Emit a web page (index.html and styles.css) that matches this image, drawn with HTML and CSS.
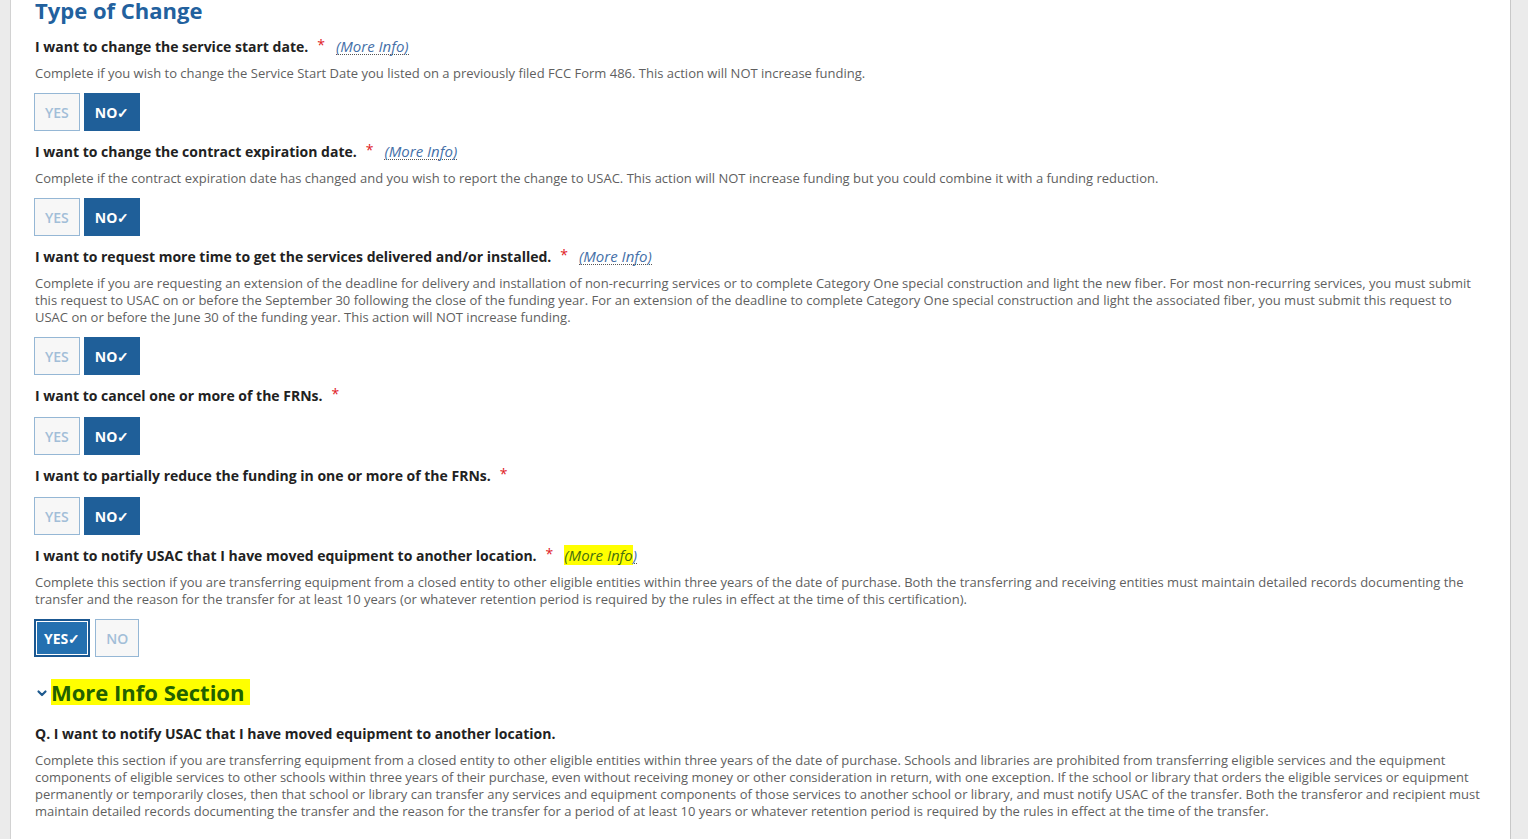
FILE: index.html
```html
<!DOCTYPE html>
<html>
<head>
<meta charset="utf-8">
<link rel="stylesheet" href="styles.css">
</head>
<body>
<div class="page">
  <main class="panel">
    <h2 class="title">Type of Change</h2>

    <section class="q">
      <div class="q-label">I want to change the service start date.<span class="req">*</span><a class="more">(More Info)</a></div>
      <p class="q-desc">Complete if you wish to change the Service Start Date you listed on a previously filed FCC Form 486. This action will NOT increase funding.</p>
      <div class="toggle"><button class="btn off">YES</button><button class="btn on">NO✓</button></div>
    </section>

    <section class="q">
      <div class="q-label">I want to change the contract expiration date.<span class="req">*</span><a class="more">(More Info)</a></div>
      <p class="q-desc">Complete if the contract expiration date has changed and you wish to report the change to USAC. This action will NOT increase funding but you could combine it with a funding reduction.</p>
      <div class="toggle"><button class="btn off">YES</button><button class="btn on">NO✓</button></div>
    </section>

    <section class="q">
      <div class="q-label">I want to request more time to get the services delivered and/or installed.<span class="req">*</span><a class="more">(More Info)</a></div>
      <p class="q-desc">Complete if you are requesting an extension of the deadline for delivery and installation of non-recurring services or to complete Category One special construction and light the new fiber. For most non-recurring services, you must submit this request to USAC on or before the September 30 following the close of the funding year. For an extension of the deadline to complete Category One special construction and light the associated fiber, you must submit this request to USAC on or before the June 30 of the funding year. This action will NOT increase funding.</p>
      <div class="toggle"><button class="btn off">YES</button><button class="btn on">NO✓</button></div>
    </section>

    <section class="q">
      <div class="q-label">I want to cancel one or more of the FRNs.<span class="req">*</span></div>
      <div class="toggle"><button class="btn off">YES</button><button class="btn on">NO✓</button></div>
    </section>

    <section class="q">
      <div class="q-label">I want to partially reduce the funding in one or more of the FRNs.<span class="req">*</span></div>
      <div class="toggle"><button class="btn off">YES</button><button class="btn on">NO✓</button></div>
    </section>

    <section class="q">
      <div class="q-label">I want to notify USAC that I have moved equipment to another location.<span class="req">*</span><a class="more"><span class="hl">(More Info</span>)</a></div>
      <p class="q-desc">Complete this section if you are transferring equipment from a closed entity to other eligible entities within three years of the date of purchase. Both the transferring and receiving entities must maintain detailed records documenting the transfer and the reason for the transfer for at least 10 years (or whatever retention period is required by the rules in effect at the time of this certification).</p>
      <div class="toggle"><button class="btn on focus">YES✓</button><button class="btn off">NO</button></div>
    </section>

    <h3 class="more-title">
      <svg class="chev" width="12" height="10" viewBox="0 0 12 10"><path d="M2.5 3.5 L6 7 L9.5 3.5" fill="none" stroke="#1f5a8f" stroke-width="2.2" stroke-linecap="round" stroke-linejoin="round"/></svg><span class="hl-big">More Info Section</span>
    </h3>

    <div class="q-label">Q. I want to notify USAC that I have moved equipment to another location.</div>
    <p class="q-desc">Complete this section if you are transferring equipment from a closed entity to other eligible entities within three years of the date of purchase. Schools and libraries are prohibited from transferring eligible services and the equipment components of eligible services to other schools within three years of their purchase, even without receiving money or other consideration in return, with one exception. If the school or library that orders the eligible services or equipment permanently or temporarily closes, then that school or library can transfer any services and equipment components of those services to another school or library, and must notify USAC of the transfer. Both the transferor and recipient must maintain detailed records documenting the transfer and the reason for the transfer for a period of at least 10 years or whatever retention period is required by the rules in effect at the time of the transfer.</p>
  </main>
</div>
</body>
</html>
```

FILE: styles.css
```css
html, body {
  margin: 0;
  padding: 0;
  background: #ebebeb;
  font-family: "Open Sans", "Liberation Sans", sans-serif;
  color: #333;
}

.page {
  display: flex;
  padding-left: 10px;
  height: 839px;
  overflow: hidden;
}

.panel {
  width: 1451px;
  background: #fff;
  border-left: 1px solid #d2d2d2;
  border-right: 1px solid #c8c8c8;
  padding: 0 24px 0 24px;
  flex: none;
}

.title {
  margin: -4px 0 13px;
  font-size: 22px;
  line-height: 28px;
  font-weight: 700;
  color: #22619e;
}

.q-label {
  font-size: 14px;
  line-height: 20px;
  font-weight: 700;
  color: #222;
  margin: 0 0 8px;
}

.req {
  color: #e0201f;
  font-weight: 400;
  margin-left: 9px;
  position: relative;
  top: -2px;
}

.more {
  margin-left: 11px;
  font-size: 15px;
  font-style: italic;
  font-weight: 400;
  color: #4570a8;
  border-bottom: 1px dotted #555;
  line-height: 16px;
  display: inline-block;
}

.hl {
  background: #ffff00;
  color: #456f10;
}

.q-desc {
  font-size: 13px;
  line-height: 17px;
  color: #5f5f5f;
  margin: 0 0 8px;
}

.toggle {
  display: flex;
  gap: 4px;
  padding-top: 3px;
  margin: 0 0 11px -1px;
}

.btn {
  height: 38px;
  padding: 0 10px;
  font-family: "Open Sans", "Liberation Sans", sans-serif;
  font-size: 14px;
  font-weight: 600;
  border: 1px solid #95b7d5;
  background: #f7f7f7;
  color: #a2bed8;
  cursor: pointer;
}

.btn.on {
  background: #1f5f99;
  border-color: #1f5f99;
  color: #fff;
  font-weight: 700;
}

.btn.focus {
  background: #2470b0;
  border: 2px solid #1a5791;
  box-shadow: inset 0 0 0 1px #fff;
  padding: 0 8px;
  margin-right: 1px;
}

.more-title {
  display: flex;
  align-items: center;
  margin: 22px 0 19px 1px;
  font-size: 22px;
  line-height: 26px;
  font-weight: 700;
  color: #22619e;
}

.chev {
  display: block;
  margin-top: 2px;
  margin-right: 3px;
}

.hl-big {
  background: #ffff00;
  color: #226100;
  padding: 0 6px 0 0;
  line-height: 26px;
}
```
